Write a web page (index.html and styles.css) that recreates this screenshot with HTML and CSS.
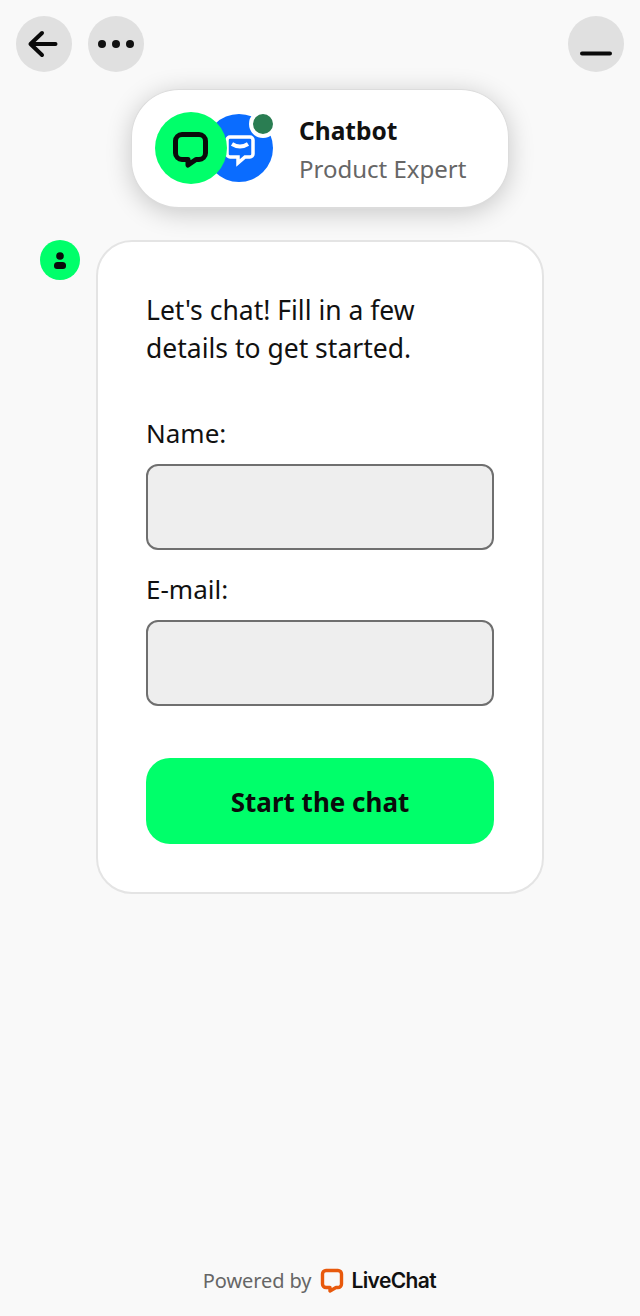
FILE: index.html
```html
<!DOCTYPE html>
<html lang="en">
<head>
<meta charset="utf-8">
<title>Chatbot</title>
<link rel="stylesheet" href="styles.css">
</head>
<body>
<div class="page">
  <header class="top">
    <div class="top-group">
      <button class="round" aria-label="Back">
        <svg width="56" height="56" viewBox="0 0 56 56"><path d="M14.500 28H39.500M26 17 14.500 28 26 39" fill="none" stroke="#0a0a0a" stroke-width="4" stroke-linecap="round" stroke-linejoin="round"/></svg>
      </button>
      <button class="round" aria-label="More">
        <svg width="56" height="56" viewBox="0 0 56 56"><circle cx="14" cy="28" r="4" fill="#111"/><circle cx="28" cy="28" r="4" fill="#111"/><circle cx="42" cy="28" r="4" fill="#111"/></svg>
      </button>
    </div>
    <button class="round" aria-label="Minimize">
      <svg width="56" height="56" viewBox="0 0 56 56"><path d="M14 37.500H42" stroke="#0a0a0a" stroke-width="4" stroke-linecap="round"/></svg>
    </button>
  </header>

  <section class="agent">
    <div class="avatars">
      <div class="avatar-blue">
        <svg width="62" height="62" viewBox="0 0 62 62"><path d="M22 20H42a3 3 0 0 1 3 3V37a3 3 0 0 1-3 3H37L30 46V40H22a3 3 0 0 1-3-3V23a3 3 0 0 1 3-3Z" fill="#0a6cff" stroke="#fff" stroke-width="3.500"/><path d="M24 27Q32 32 40 27" fill="none" stroke="#fff" stroke-width="4"/></svg>
      </div>
      <div class="avatar-green">
        <svg width="72" height="72" viewBox="0 0 72 72"><path d="M27 22.500H44a6.500 6.500 0 0 1 6.500 6.500V41a6.500 6.500 0 0 1-6.500 6.500H41L33 53V47.500H27a6.500 6.500 0 0 1-6.500-6.500V29a6.500 6.500 0 0 1 6.500-6.500Z" fill="none" stroke="#0b0b0b" stroke-width="5" stroke-linejoin="round"/></svg>
      </div>
      <span class="status"></span>
    </div>
    <div class="agent-text">
      <div class="agent-name">Chatbot</div>
      <div class="agent-role">Product Expert</div>
    </div>
  </section>

  <main class="message">
    <div class="user-dot">
      <svg width="20" height="20" viewBox="0 0 20 20"><circle cx="10" cy="6" r="3.800" fill="#0b0b0b"/><path d="M7.500 12H12.500a3.500 3.500 0 0 1 3.500 3.500V16a3 3 0 0 1-3 3H7a3 3 0 0 1-3-3V15.500A3.500 3.500 0 0 1 7.500 12Z" fill="#0b0b0b"/></svg>
    </div>
    <form class="card">
      <p class="intro">Let's chat! Fill in a few details to get started.</p>
      <label class="field-label">Name:</label>
      <div class="input"></div>
      <label class="field-label second">E-mail:</label>
      <div class="input"></div>
      <div class="submit"><span class="submit-text">Start the chat</span></div>
    </form>
  </main>

  <footer class="foot">
    <span class="powered">Powered by</span>
    <svg class="lc-logo" width="24" height="25" viewBox="0 0 24 25"><path d="M6 2.500H18a3.500 3.500 0 0 1 3.500 3.500V16a3.500 3.500 0 0 1-3.500 3.500H16L10 23V19.500H6A3.500 3.500 0 0 1 2.500 16V6A3.500 3.500 0 0 1 6 2.500Z" fill="none" stroke="#e8590c" stroke-width="3.400" stroke-linejoin="round"/></svg>
    <span class="brand">LiveChat</span>
  </footer>
</div>
</body>
</html>
```
FILE: styles.css
```css
* { box-sizing: border-box; }
html, body { margin: 0; padding: 0; }
body {
  background: #f9f9f9;
  font-family: "Noto Sans", "Open Sans", sans-serif;
  color: #111;
}
.page {
  width: 640px;
  height: 1316px;
  display: flex;
  flex-direction: column;
}
.top {
  display: flex;
  justify-content: space-between;
  padding: 16px 16px 0;
}
.top-group { display: flex; gap: 16px; }
.round {
  width: 56px;
  height: 56px;
  padding: 0;
  border: 0;
  border-radius: 50%;
  background: #e0e0e0;
  display: block;
}
.round svg { display: block; }
.agent {
  align-self: center;
  width: 378px;
  height: 120px;
  margin-top: 17px;
  background: #fff;
  border: 1px solid #dcdcdc;
  border-bottom-width: 2px;
  border-radius: 48px;
  box-shadow: 0 4px 26px rgba(0, 0, 0, 0.2);
  display: flex;
  align-items: center;
  padding-left: 23px;
}
.avatars {
  position: relative;
  width: 120px;
  height: 72px;
  flex: none;
  margin-bottom: 2px;
}
.avatar-blue {
  position: absolute;
  left: 50px;
  top: 2px;
  width: 68px;
  height: 68px;
  display: flex;
  align-items: center;
  justify-content: center;
  background: #0a6cff;
  border-radius: 50%;
}
.avatar-green {
  position: absolute;
  left: 0;
  top: 0;
  width: 72px;
  height: 72px;
  background: #00ff6a;
  border-radius: 50%;
}
.status {
  position: absolute;
  left: 94px;
  top: -2px;
  width: 28px;
  height: 28px;
  background: #2a7d52;
  border: 4px solid #fff;
  border-radius: 50%;
}
.agent-text { margin-left: 24px; margin-top: 2px; }
.agent-name {
  font-size: 24.500px;
  font-weight: 700;
  line-height: 38px;
  color: #111;
}
.agent-role {
  font-size: 24px;
  line-height: 38px;
  color: #666;
}
.message {
  display: flex;
  align-items: flex-start;
  margin-top: 31px;
  padding-left: 40px;
}
.user-dot {
  width: 40px;
  height: 40px;
  flex: none;
  background: #00ff6a;
  border-radius: 50%;
  display: flex;
  align-items: center;
  justify-content: center;
}
.card {
  width: 448px;
  height: 654px;
  margin-left: 16px;
  background: #fff;
  border: 2px solid #e4e4e4;
  border-radius: 36px;
  padding: 49px 48px 0 48px;
}
.intro {
  margin: 0;
  font-size: 26.500px;
  line-height: 38px;
  width: 300px;
  color: #111;
}
.field-label {
  display: block;
  font-size: 26px;
  line-height: 38px;
  margin-top: 47px;
  margin-bottom: 12px;
}
.field-label.second { margin-top: 20px; }
.input {
  height: 86px;
  background: #eeeeee;
  border: 2px solid #6f6f6f;
  border-radius: 12px;
}
.submit {
  height: 86px;
  margin-top: 52px;
  padding-top: 2px;
  background: #00ff6a;
  border-radius: 24px;
  display: flex;
  align-items: center;
  justify-content: center;
}
.submit-text {
  font-size: 26px;
  font-weight: 700;
  color: #0b0b0b;
}
.foot {
  margin-top: auto;
  height: 72px;
  display: flex;
  align-items: center;
  justify-content: center;
  padding-right: 1px;
}
.powered { font-size: 20px; color: #666; letter-spacing: -0.1px; }
.lc-logo { margin-left: 9px; margin-right: 7px; }
.brand {
  font-family: "Inter", sans-serif;
  font-size: 21px;
  font-weight: 600;
  letter-spacing: -0.6px;
  color: #111;
}
```
